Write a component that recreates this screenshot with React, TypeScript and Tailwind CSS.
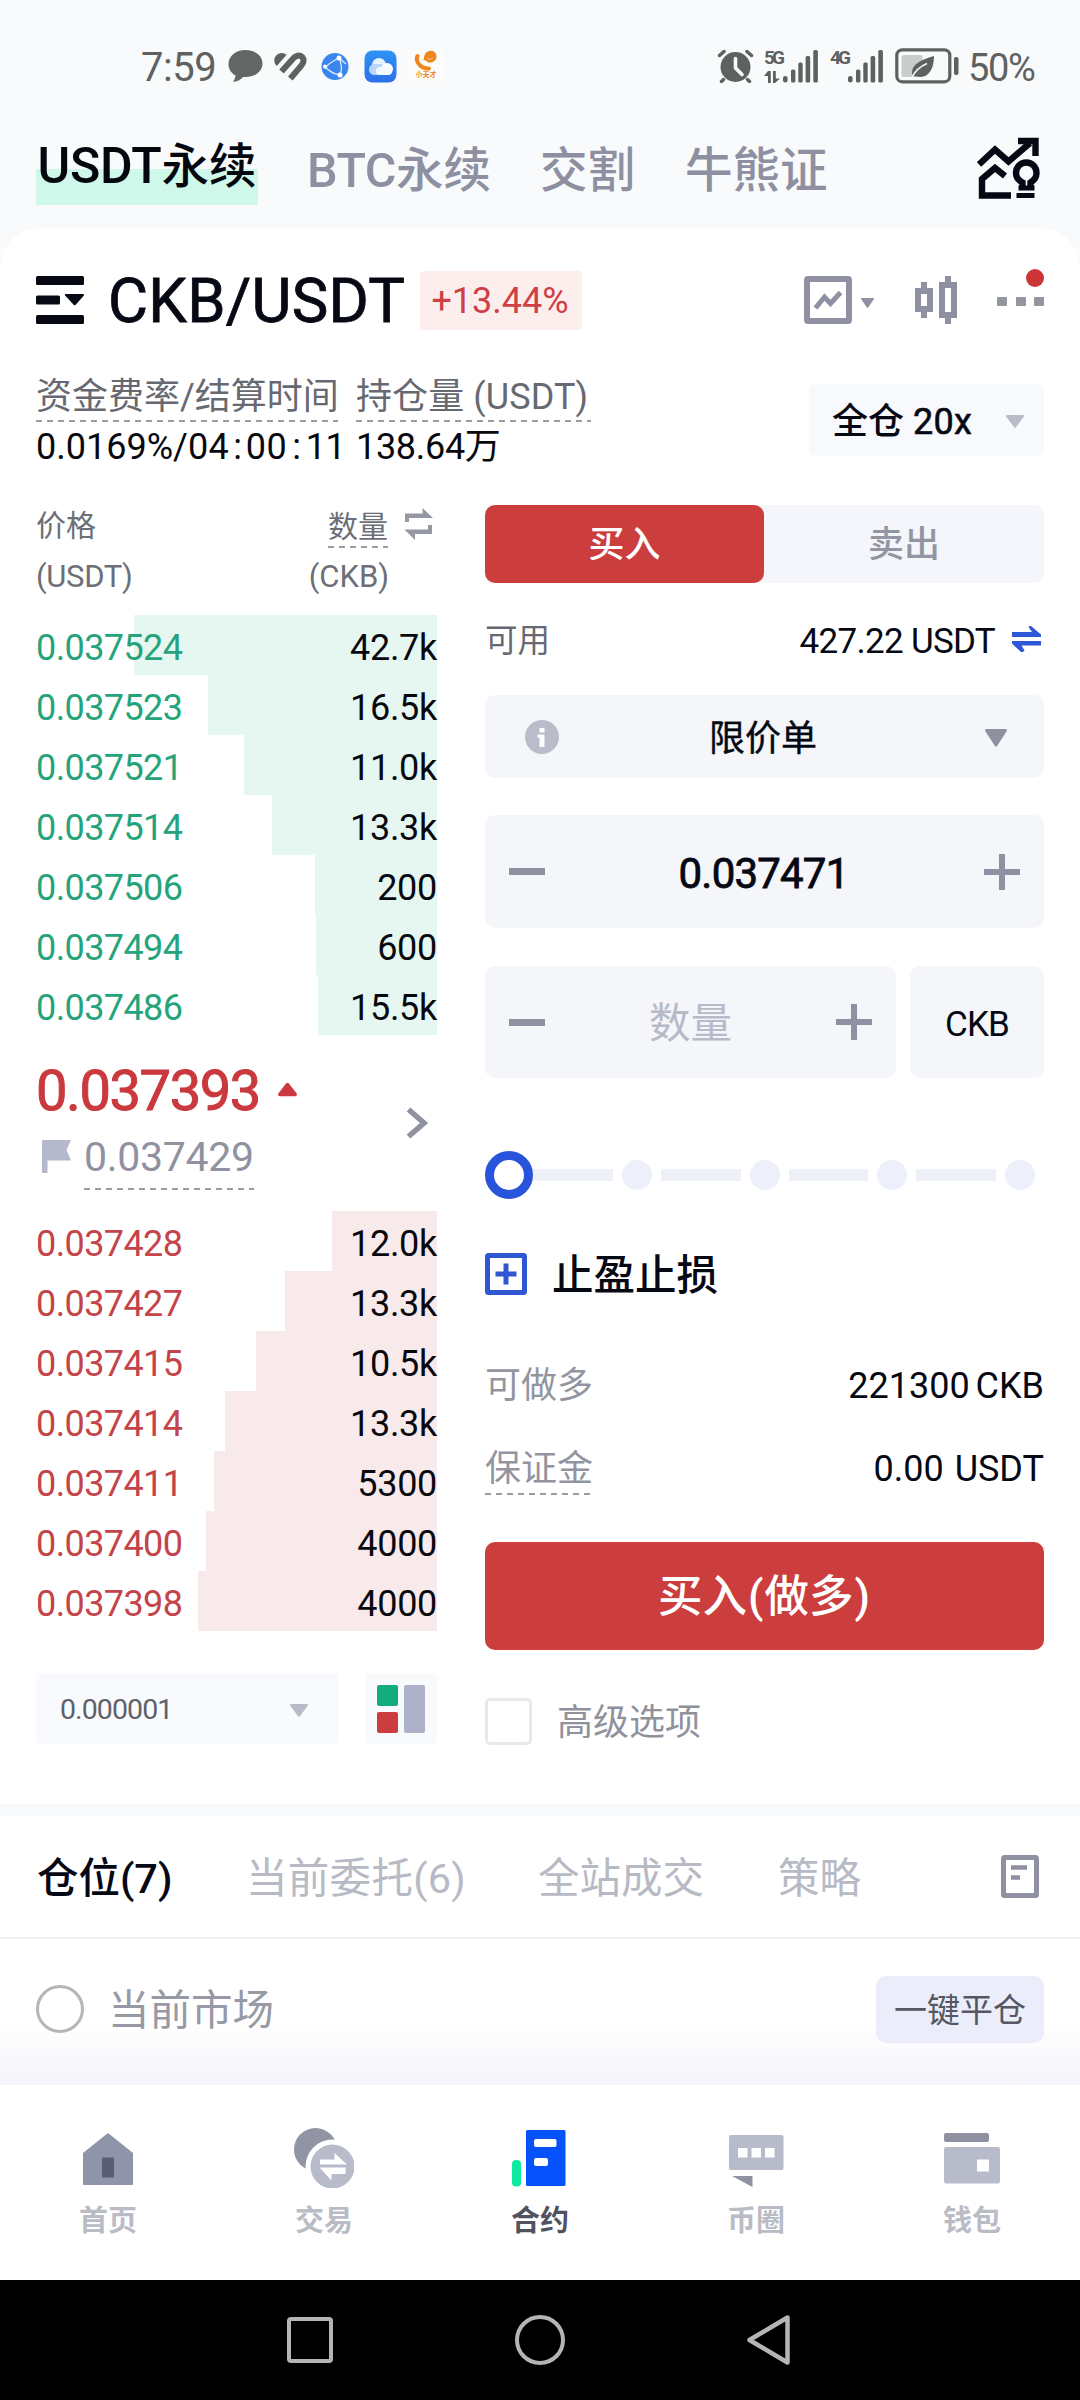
import React from "react";

type Level = { price: string; qty: string; depth: number };

const topLevels: Level[] = [
  { price: "0.037524", qty: "42.7k", depth: 303 },
  { price: "0.037523", qty: "16.5k", depth: 229 },
  { price: "0.037521", qty: "11.0k", depth: 193 },
  { price: "0.037514", qty: "13.3k", depth: 165 },
  { price: "0.037506", qty: "200", depth: 122 },
  { price: "0.037494", qty: "600", depth: 121 },
  { price: "0.037486", qty: "15.5k", depth: 119 },
];

const bottomLevels: Level[] = [
  { price: "0.037428", qty: "12.0k", depth: 105 },
  { price: "0.037427", qty: "13.3k", depth: 152 },
  { price: "0.037415", qty: "10.5k", depth: 181 },
  { price: "0.037414", qty: "13.3k", depth: 212 },
  { price: "0.037411", qty: "5300", depth: 223 },
  { price: "0.037400", qty: "4000", depth: 231 },
  { price: "0.037398", qty: "4000", depth: 239 },
];

function Dashes() {
  return (
    <span className="block h-[2px] w-full bg-[repeating-linear-gradient(90deg,#9a9ca4_0_6px,transparent_6px_11px)]" />
  );
}

function Triangle({ w, h, className }: { w: number; h: number; className: string }) {
  return (
    <svg width={w} height={h} viewBox="0 0 20 14" preserveAspectRatio="none" className={className} fill="currentColor">
      <path d="M1.2 0h17.6c1 0 1.5 1 .9 1.8L11 13.2c-.5.8-1.5.8-2 0L.3 1.8C-.3 1 .2 0 1.2 0z" />
    </svg>
  );
}

function Signal() {
  return (
    <svg width="36" height="34" viewBox="0 0 36 34" fill="#5f6160">
      <rect x="0" y="27" width="4.6" height="6.5" rx="2.2" />
      <rect x="8" y="20.5" width="4.4" height="13" rx="1.6" />
      <rect x="15.3" y="13.5" width="4.4" height="20" rx="1.6" />
      <rect x="22.6" y="7" width="4.6" height="26.5" rx="1.6" />
      <rect x="30.3" y="1" width="4.6" height="32.5" rx="1.6" />
    </svg>
  );
}

function StatusBar() {
  return (
    <div className="flex h-[132px] items-center pl-[141px] pr-[43px] text-[#5f6160]">
      <span className="w-[87px] whitespace-nowrap pt-[3px] text-[40px] leading-none tracking-[-0.500px]">7:59</span>
      <svg width="35" height="34" viewBox="0 0 35 34" fill="#646665">
        <path d="M17.5 1C8 1 .5 7 .5 15c0 5 2.500 9 7 11.500-.2 2.200-1 4.300-2.500 6.200 4 0 7.500-1.600 10-4.700h2.500c9.500 0 17-5.500 17-13.500S27 1 17.500 1z" />
      </svg>
      <svg width="34" height="30" viewBox="0 0 34 30" className="ml-[10px]">
        <path d="M3.800 15 13.600 3.800A7.400 7.400 0 0 0 3.800 15z" fill="#5f6160" />
        <path d="M8.500 20.500 19.500 8.200C22.500 4.600 27 3.300 29.200 6c2.100 2.600 1.400 6-1.200 9L17.300 27.500" fill="none" stroke="#5f6160" strokeWidth="6" />
      </svg>
      <svg width="28" height="29" viewBox="0 0 28 29" className="ml-[14px]">
        <circle cx="14" cy="14.500" r="13.500" fill="#3a86ee" />
        <g fill="none" stroke="#d9ebff" strokeWidth="1.300">
          <path d="M18 6C12 9 7 12 3.500 16.500M18 6c3 6 3 12 1 18M3.500 14c4 5 9 8 15.500 9M18 6l7 6" />
        </g>
        <circle cx="18" cy="6" r="2.500" fill="#fff" />
        <circle cx="4" cy="14.500" r="2" fill="#fff" />
        <circle cx="19" cy="23" r="2.500" fill="#fff" />
      </svg>
      <svg width="33" height="33" viewBox="0 0 33 33" className="ml-[15px]">
        <defs>
          <linearGradient id="cloudBg" x1="0" y1="0" x2="0" y2="1">
            <stop offset="0" stopColor="#2f93f5" />
            <stop offset="1" stopColor="#2c6fe8" />
          </linearGradient>
        </defs>
        <rect x=".5" y=".5" width="32" height="32" rx="8" fill="url(#cloudBg)" />
        <circle cx="15" cy="15" r="7" fill="#e7f2ff" />
        <rect x="5" y="14" width="18" height="11" rx="5.500" fill="#b8d7fb" />
        <circle cx="23" cy="19" r="6" fill="#fff" />
        <rect x="12" y="17" width="16" height="8" rx="4" fill="#f4f9ff" />
      </svg>
      <div className="ml-[11px] flex h-[32px] w-[36px] flex-col items-center bg-[#fcfcfb]">
        <svg width="24" height="21" viewBox="0 0 24 21">
          <path d="M3.500 6C1 11 6 19 15 18.500" fill="none" stroke="#f08519" strokeWidth="4" strokeLinecap="round" />
          <path d="M15.500 1c4-.8 7 2 7 5.500s-3 6-6.500 6c-2 0-3-.5-4.500-2.500C9.500 11 9 10 10 8c.5-4 2-6.500 5.500-7z" fill="#f08519" />
          <path d="M13 8c2 2 5 1.500 6-.5" fill="none" stroke="#fbd9b0" strokeWidth="1" />
        </svg>
        <span className="whitespace-nowrap text-[7px] leading-[9px] font-bold text-[#f08519]">小天才</span>
      </div>

      <div className="ml-auto flex items-center">
        <svg width="37" height="34" viewBox="0 0 37 34">
          <circle cx="18.500" cy="18" r="15" fill="#5f6160" />
          <g stroke="#5f6160" strokeWidth="3.500" strokeLinecap="round">
            <path d="M2.500 6.500 7 2.500M34.500 6.500 30 2.500M6.500 30.500 4.500 32.500M30.500 30.500l2 2" />
          </g>
          <path d="M18.500 9.500V19l6.500 6.500" fill="none" stroke="#f8fafc" strokeWidth="3.600" strokeLinecap="round" />
        </svg>
        <div className="ml-[10px] flex h-[34px] w-[19px] flex-col justify-between">
          <span className="whitespace-nowrap text-[19px] leading-[17px] font-bold tracking-[-2.800px]">5G</span>
          <svg width="17" height="12" viewBox="0 0 17 12" fill="#5f6160">
            <path d="M4 0h2.800v12H4V5H0zM9 0h2.800v7.500H16L11 12H9z" />
          </svg>
        </div>
        <Signal />
        <span className="ml-[11px] h-[34px] w-[18px] whitespace-nowrap text-[19px] leading-[17px] font-bold tracking-[-2.800px]">4G</span>
        <Signal />
        <svg width="65" height="36" viewBox="0 0 65 36" className="ml-[11px]">
          <rect x="1.800" y="1.800" width="53" height="32" rx="5.500" fill="none" stroke="#5f6160" strokeWidth="3.200" />
          <rect x="6.500" y="7" width="21" height="22" rx="2.500" fill="#c9cbcc" />
          <rect x="59" y="9" width="4.500" height="18" rx="2" fill="#5f6160" />
          <path d="M17.500 28C15 17 25 12 39 8c0 14-6 23-17 20.500z" fill="#5f6160" />
          <path d="M17 29.500C20 23 25 18.500 32 15.500" fill="none" stroke="#f0f2f3" strokeWidth="1.800" />
        </svg>
        <span className="ml-[8px] w-[69px] whitespace-nowrap pt-[3px] text-[38px] leading-none tracking-[-1.400px]">50%</span>
      </div>
    </div>
  );
}

function ProductTabs() {
  return (
    <div className="flex h-[96px] pl-[36px] pr-[40px] text-[47.500px] leading-none font-medium whitespace-nowrap text-[#8e90a1]">
      <div className="flex h-[73px] w-[222px] items-baseline justify-center bg-[linear-gradient(#f8fafc_0_37px,#cff7ea_37px)] pt-[9px] text-[#05070f]">
        <span className="text-[50px] tracking-[-0.200px]">USDT</span>永续
      </div>
      <div className="ml-[49px] mt-[15px] flex w-[187px] items-baseline">
        <span className="text-[48.500px] tracking-[-0.500px]">BTC</span>永续
      </div>
      <span className="ml-[46px] mt-[16px] w-[98px]">交割</span>
      <span className="ml-[47px] mt-[16px]">牛熊证</span>
      <svg width="63" height="62" viewBox="0 0 63 62" className="ml-auto mt-[5px]" fill="none" stroke="#060813" strokeWidth="6.400">
        <path d="M2 27.500 18 12.500 31.500 24.500 53 6" />
        <path d="M41 4h17.500v15" />
        <path d="M28 39 18 31 5 42v16.500h29" />
        <path d="M45.500 51v-5.500c-3.800-2-6.500-5-6.500-9.500 0-6 4.500-10.500 10.300-10.500S59.500 30 59.500 36c0 4.500-2.700 7.500-6 9.500V51" />
        <path d="M39.500 58.500h18M41.500 51h16" strokeWidth="5" />
      </svg>
    </div>
  );
}

function PairHeader() {
  return (
    <div className="flex h-[144px] items-center pl-[36px] pr-[36px]">
      <svg width="48" height="48" viewBox="0 0 48 48" fill="#060813">
        <rect width="48" height="9" rx="1.500" />
        <rect y="19.500" width="24" height="9" rx="1.500" />
        <path d="M30 18h17c1 0 1.300 1 .7 1.700l-8 9c-.6.700-1.500.7-2 0l-8.400-9c-.7-.7-.3-1.700.7-1.700z" />
        <rect y="39" width="48" height="9" rx="1.500" />
      </svg>
      <span className="ml-[24px] w-[312px] whitespace-nowrap pt-[3px] text-[61.500px] leading-none tracking-[0.300px] text-[#060813] [-webkit-text-stroke:0.8px_#060813]">
        CKB/USDT
      </span>
      <span className="flex h-[59px] w-[162px] items-center justify-center rounded-[4px] bg-[#fdeeee] pt-[2px] pr-[2px] text-[36px] leading-none text-[#cf4044]">
        +13.44%
      </span>
      <svg width="48" height="48" viewBox="0 0 48 48" className="ml-auto" fill="none" stroke="#8f91a3" strokeWidth="6">
        <rect x="3" y="3" width="42" height="42" rx="1" />
        <path d="M11.500 32 20.500 21l6 6.500L36.500 16.500" strokeWidth="5" />
      </svg>
      <Triangle w={13} h={10} className="ml-[9px] mt-[6px] text-[#8f91a3]" />
      <svg width="42" height="48" viewBox="0 0 42 48" className="ml-[41px]">
        <path d="M6 6h6v36H6zM30 0h6v48h-6z" fill="#8f91a3" />
        <path d="M3 15h12v18H3zM27 9h12v30H27z" fill="#fff" stroke="#8f91a3" strokeWidth="6" />
      </svg>
      <div className="relative ml-[40px] flex w-[47px] items-center justify-between pt-[3px]">
        <i className="h-[9px] w-[10px] rounded-[1px] bg-[#94969f]" />
        <i className="h-[9px] w-[10px] rounded-[1px] bg-[#94969f]" />
        <i className="h-[9px] w-[10px] rounded-[1px] bg-[#94969f]" />
        <i className="absolute right-0 -top-[25px] h-[18px] w-[18px] rounded-full bg-[#cb3538]" />
      </div>
    </div>
  );
}

function InfoRow() {
  return (
    <div className="flex h-[120px] pl-[36px] pr-[36px] whitespace-nowrap text-[36px]">
      <div className="w-[302px]">
        <div className="h-[48px] pt-[1px] leading-[48px] text-[#666972]">资金费率/结算时间</div>
        <Dashes />
        <div className="mt-[5px] leading-[40px] text-[#08090f]">
          <span>0.0169%/</span>
          <span className="tracking-[0.400px]">04</span>
          <span className="px-[4px]">:</span>
          <span className="tracking-[0.400px]">00</span>
          <span className="px-[5px]">:</span>
          <span className="tracking-[-0.500px]">11</span>
        </div>
      </div>
      <div className="ml-[18px] w-[235px]">
        <div className="h-[48px] pt-[1px] leading-[48px] tracking-[0.100px] text-[#666972]">持仓量 (USDT)</div>
        <Dashes />
        <div className="mt-[5px] leading-[40px] tracking-[-0.300px] text-[#08090f]">138.64万</div>
      </div>
      <div className="ml-auto mt-[12px] flex h-[72px] w-[235px] items-center rounded-[6px] bg-[#f8f9fc] pl-[23px] pr-[20px] leading-none text-[#060813]">
        <span className="pt-[3px] font-medium">
          全仓 <span className="font-normal tracking-[0.300px] [-webkit-text-stroke:0.6px_#060813]">20x</span>
        </span>
        <Triangle w={18} h={13} className="ml-auto mt-[3px] text-[#b8bbc8]" />
      </div>
    </div>
  );
}

function Levels({ rows, up }: { rows: Level[]; up: boolean }) {
  return (
    <div className="flex flex-col">
      {rows.map((r) => (
        <div key={r.price} className="relative flex h-[60px] items-center justify-between pt-[5px] text-[36px] leading-none">
          <div
            className={up ? "absolute right-0 top-0 h-full bg-[#e6f7f1]" : "absolute right-0 top-0 h-full bg-[#f8eaea]"}
            style={{ width: r.depth }}
          />
          <span className={up ? "relative tracking-[-0.600px] text-[#25a47b]" : "relative tracking-[-0.600px] text-[#c4444a]"}>
            {r.price}
          </span>
          <span className="relative tracking-[-0.300px] text-[#08090f]">{r.qty}</span>
        </div>
      ))}
    </div>
  );
}

function OrderBook() {
  return (
    <div className="flex w-[401px] flex-col whitespace-nowrap">
      <div className="flex h-[64px] items-center text-[30px] leading-none text-[#6c6f77]">
        <span className="pt-[3px]">价格</span>
        <div className="ml-auto flex flex-col pt-[11px]">
          <span className="mb-[4px]">数量</span>
          <Dashes />
        </div>
        <svg width="30" height="32" viewBox="0 0 30 32" className="ml-[16px] mr-[3px]" fill="#9597a3">
          <path d="M1 14V5.500h17.500V0L29 10H5v4z" />
          <path d="M28 17v9H11v6L.5 21.500H24V17z" />
        </svg>
      </div>
      <div className="flex h-[59px] justify-between pr-[48px] pt-[3px] text-[31px] leading-[36px] text-[#6c6f77]">
        <span className="tracking-[-0.300px]">(USDT)</span>
        <span>(CKB)</span>
      </div>
      <Levels rows={topLevels} up />
      <div className="flex h-[176px] justify-between">
        <div className="flex flex-col pt-[26px]">
          <div className="flex items-center text-[#c9393d]">
            <span className="text-[56px] leading-[60px] tracking-[-1.400px] [-webkit-text-stroke:1px_#c9393d]">0.037393</span>
            <svg width="19" height="15" viewBox="0 0 20 14" className="mb-[4px] ml-[18px]" fill="currentColor">
              <path d="M8.500.7c.8-.9 2.200-.9 3 0l8 10.300c.9 1.200.2 3-1.300 3H1.800c-1.500 0-2.200-1.800-1.300-3z" />
            </svg>
          </div>
          <div className="flex items-start pl-[6px] pt-[12px]">
            <svg width="30" height="33" viewBox="0 0 30 33" className="mt-[7px]" fill="#b6b9cb">
              <path d="M0 1.500C0 .7.700 0 1.500 0H29l-4.500 10L29 20.500H5.500V33H0z" />
            </svg>
            <div className="ml-[12px]">
              <div className="pb-[7px] text-[41px] leading-[48px] tracking-[-0.300px] text-[#9092a0]">0.037429</div>
              <Dashes />
            </div>
          </div>
        </div>
        <svg width="22" height="32" viewBox="0 0 22 32" className="mr-[9px] self-center" fill="none" stroke="#9092a0" strokeWidth="5.500">
          <path d="M2.500 2.500 18 16 2.500 29.500" />
        </svg>
      </div>
      <Levels rows={bottomLevels} up={false} />
      <div className="mt-[42px] flex justify-between">
        <div className="flex h-[71px] w-[303px] items-center justify-between rounded-[4px] bg-[#f9fafd] pl-[24px] pr-[31px] text-[28.500px] leading-none tracking-[-0.900px] text-[#5f626a]">
          <span className="pt-[3px]">0.000001</span>
          <Triangle w={18} h={13} className="mt-[4px] text-[#b8bbc8]" />
        </div>
        <div className="flex h-[71px] w-[72px] items-center justify-center gap-[6px] rounded-[4px] bg-[#f9fafc]">
          <div className="flex flex-col gap-[6px]">
            <i className="h-[21px] w-[21px] rounded-[2px] bg-[#13ad7b]" />
            <i className="h-[21px] w-[21px] rounded-[2px] bg-[#cb3e3d]" />
          </div>
          <i className="h-[48px] w-[21px] rounded-[2px] bg-[#adb2c9]" />
        </div>
      </div>
    </div>
  );
}

function Minus() {
  return <i className="h-[7px] w-[36px] bg-[#8f91a3]" />;
}

function Plus() {
  return (
    <svg width="36" height="36" viewBox="0 0 36 36" fill="#8f91a3">
      <path d="M15 0h6v15h15v6H21v15h-6V21H0v-6h15z" />
    </svg>
  );
}

function AmountSlider() {
  return (
    <div className="mt-[73px] flex h-[48px] items-center pr-[9px]">
      <i className="h-[48px] w-[48px] shrink-0 rounded-full border-[9px] border-[#2854dc] bg-white" />
      {[0, 1, 2, 3].map((n) => (
        <React.Fragment key={n}>
          <i className={n === 0 ? "h-[12px] flex-1 bg-[#eff1f8]" : "ml-[9px] h-[12px] flex-1 bg-[#eff1f8]"} />
          <i className="ml-[9px] h-[30px] w-[30px] shrink-0 rounded-full bg-[#edf0fb]" />
        </React.Fragment>
      ))}
    </div>
  );
}

function OrderForm() {
  return (
    <div className="flex w-[559px] flex-col whitespace-nowrap pt-[13px] leading-none text-[#060813]">
      <div className="flex h-[78px] rounded-[10px] bg-[#f4f6fb] text-[36px]">
        <div className="flex w-[279px] items-center justify-center rounded-[10px] bg-[#cc3d3d] pt-[2px] font-medium text-white">买入</div>
        <div className="flex flex-1 items-center justify-center pt-[2px] font-medium text-[#9295a2]">卖出</div>
      </div>
      <div className="flex h-[112px] items-center text-[35px]">
        <span className="pt-[4px] text-[32.500px] text-[#666972]">可用</span>
        <span className="ml-auto pt-[5px] tracking-[-0.700px]">427.22 USDT</span>
        <svg width="29" height="26" viewBox="0 0 29 26" className="ml-[17px] mr-[3px]" fill="#2f58d6">
          <path d="M0 6h20l-3.500-5 1-1H19l10 8.500V11H0z" />
          <path d="M29 15v4.500H9.500l3 5L11 26H9L0 17.500V15z" />
        </svg>
      </div>
      <div className="flex h-[83px] items-center justify-between rounded-[10px] bg-[#f4f6fa] pl-[40px] pr-[37px] text-[36px]">
        <svg width="34" height="34" viewBox="0 0 34 34">
          <circle cx="17" cy="17" r="17" fill="#b9bcc9" />
          <path d="M14.500 8h5v4.500h-5zM12.500 14.500h7V27h-5v-9.500h-2z" fill="#fff" />
        </svg>
        <span className="pt-[5px] pr-[18px] [-webkit-text-stroke:0.4px_#060813]">限价单</span>
        <Triangle w={22} h={18} className="mt-[3px] text-[#8f91a1]" />
      </div>
      <div className="mt-[37px] flex h-[113px] items-center justify-between rounded-[10px] bg-[#f4f6fa] px-[24px] text-[42px]">
        <Minus />
        <span className="pt-[4px] pr-[2px] tracking-[-0.800px] [-webkit-text-stroke:0.8px_#060813]">0.037471</span>
        <Plus />
      </div>
      <div className="mt-[38px] flex h-[112px] justify-between">
        <div className="flex w-[411px] items-center justify-between rounded-[10px] bg-[#f4f6fa] px-[24px] text-[41.500px] text-[#b7bac8]">
          <Minus />
          <span className="pt-[4px]">数量</span>
          <Plus />
        </div>
        <div className="flex w-[134px] items-center justify-center rounded-[10px] bg-[#f4f6fa] pt-[5px] text-[35px] tracking-[-0.900px]">CKB</div>
      </div>
      <AmountSlider />
      <div className="mt-[33px] flex h-[84px] items-center">
        <svg width="42" height="42" viewBox="0 0 42 42" fill="none" stroke="#2f57d2" strokeWidth="5">
          <rect x="2.500" y="2.500" width="37" height="37" rx="1" />
          <path d="M21 10.500v21M10.500 21h21" />
        </svg>
        <span className="ml-[25px] pt-[4px] text-[41.500px] font-medium">止盈止损</span>
      </div>
      <div className="mt-[28px] flex h-[82px] items-center justify-between pt-[2px] text-[36px]">
        <span className="text-[36px] text-[#9295a0]">可做多</span>
        <span className="[word-spacing:-3px]">221300 CKB</span>
      </div>
      <div className="flex h-[82px] items-center justify-between text-[36px]">
        <div className="flex flex-col pt-[11px] text-[36px] text-[#9295a0]">
          <span className="mb-[6px]">保证金</span>
          <Dashes />
        </div>
        <span className="pt-[3px] [word-spacing:2px]">0.00 USDT</span>
      </div>
      <div className="mt-[34px] flex h-[108px] items-center justify-center rounded-[10px] bg-[#cc3d3d] pt-[3px] text-[44.500px] font-medium text-white">
        买入<span className="px-[1px]">(</span>做多<span className="px-[1px]">)</span>
      </div>
      <div className="mt-[48px] flex h-[47px] items-center">
        <i className="h-[47px] w-[47px] rounded-[5px] border-[3px] border-[#e8e9eb]" />
        <span className="ml-[25px] pt-[3px] text-[36px] text-[#8f929d]">高级选项</span>
      </div>
    </div>
  );
}

function Positions() {
  return (
    <div className="h-[269px] whitespace-nowrap bg-[linear-gradient(#fff_0_205px,#fafafc_235px,#f4f5fa_269px)] leading-none">
      <div className="flex h-[123px] items-center border-b-[2px] border-[#f0f1f3] pl-[37px] pr-[41px] text-[41.500px] text-[#b7bac5]">
        <span className="w-[209px] pt-[4px] font-medium text-[#060813]">仓位(7)</span>
        <span className="w-[292px] pt-[4px] tracking-[0.300px]">当前委托(6)</span>
        <span className="w-[240px] pt-[4px]">全站成交</span>
        <span className="pt-[4px]">策略</span>
        <svg width="38" height="43" viewBox="0 0 38 43" className="ml-auto" fill="none" stroke="#8f91a3">
          <rect x="2.500" y="2.500" width="33" height="38" rx="1" strokeWidth="5" />
          <path d="M10 12.500h16M10 22.500h9" strokeWidth="4.500" />
        </svg>
      </div>
      <div className="flex h-[140px] items-center pl-[36px] pr-[36px]">
        <i className="h-[48px] w-[48px] rounded-full border-[3px] border-[#b5b6ba] bg-white" />
        <span className="ml-[24px] pt-[3px] text-[41.500px] text-[#9799a4]">当前市场</span>
        <span className="ml-auto flex h-[67px] w-[168px] items-center justify-center rounded-[10px] bg-[#ecedfa] pt-[2px] text-[33px] text-[#555863]">
          一键平仓
        </span>
      </div>
    </div>
  );
}

const navItems = [
  {
    label: "首页",
    icon: (
      <svg width="60" height="60" viewBox="0 0 60 60">
        <path d="M30 5 55 25v31c0 .6-.4 1-1 1H6c-.6 0-1-.4-1-1V25z" fill="#9094a8" />
        <rect x="24" y="29.500" width="12" height="20" rx="1" fill="#5a5e73" />
      </svg>
    ),
  },
  {
    label: "交易",
    icon: (
      <svg width="60" height="60" viewBox="0 0 60 60">
        <circle cx="21.500" cy="21.500" r="21.500" fill="#9094a5" />
        <circle cx="38.500" cy="38.500" r="27" fill="#fff" />
        <circle cx="38.500" cy="38.500" r="22" fill="#b8bbc9" />
        <path d="M26 31.500h14.500V25L53 36.500H26zM51.500 39.500V46h-14v6.500L25.500 39.500z" fill="#fff" />
      </svg>
    ),
  },
  {
    label: "合约",
    active: true,
    icon: (
      <svg width="60" height="60" viewBox="0 0 60 60">
        <rect x="2" y="32" width="9" height="26.500" rx="4" fill="#0ceaa0" />
        <rect x="16" y="2" width="39.500" height="56" rx="1.500" fill="#0652fb" />
        <rect x="24" y="11" width="22.500" height="8" rx="2" fill="#fff" />
        <rect x="24" y="30" width="14" height="8" rx="2" fill="#fff" />
      </svg>
    ),
  },
  {
    label: "币圈",
    icon: (
      <svg width="60" height="60" viewBox="0 0 60 60">
        <rect x="3" y="7" width="54.500" height="35" rx="2" fill="#b8bbca" />
        <path d="M12 20h9.500v9.500H12zM25.500 20H35v9.500h-9.500zM39 20h9.500v9.500H39z" fill="#fff" />
        <path d="M6 48h20.500v11z" fill="#9092a1" />
      </svg>
    ),
  },
  {
    label: "钱包",
    icon: (
      <svg width="60" height="60" viewBox="0 0 60 60">
        <rect x="2" y="5" width="45" height="9" rx="2" fill="#8f91a1" />
        <rect x="2" y="19" width="56" height="36.500" rx="2" fill="#b8bbca" />
        <rect x="35" y="31.500" width="12" height="12" fill="#fff" />
      </svg>
    ),
  },
];

function BottomNav() {
  return (
    <div className="grid h-[195px] grid-cols-5 bg-white pt-[43px]">
      {navItems.map((n) => (
        <div key={n.label} className="flex flex-col items-center">
          {n.icon}
          <span
            className={
              n.active
                ? "mt-[19px] text-[29px] leading-none font-bold text-[#50535f]"
                : "mt-[19px] text-[29px] leading-none font-bold text-[#b9bbc5]"
            }
          >
            {n.label}
          </span>
        </div>
      ))}
    </div>
  );
}

function SystemBar() {
  return (
    <div className="flex h-[120px] items-center justify-center bg-black pr-[2px]">
      <i className="h-[46px] w-[46px] rounded-[4px] border-[4.500px] border-[#b5b5b5]" />
      <i className="ml-[182px] h-[50px] w-[50px] rounded-full border-[4.500px] border-[#b5b5b5]" />
      <svg width="46" height="52" viewBox="0 0 46 52" className="ml-[181px]" fill="none" stroke="#b5b5b5" strokeWidth="4.500" strokeLinejoin="round">
        <path d="M41.500 3.500v45L3.500 26z" />
      </svg>
    </div>
  );
}

export default function App() {
  return (
    <div className="flex h-[2400px] w-[1080px] flex-col overflow-hidden bg-[#f8fafc] font-['Roboto','Noto_Sans_CJK_SC',sans-serif]">
      <StatusBar />
      <ProductTabs />
      <div className="flex h-[1576px] flex-col rounded-t-[40px] bg-white">
        <PairHeader />
        <InfoRow />
        <div className="flex gap-[48px] pl-[36px]">
          <OrderBook />
          <OrderForm />
        </div>
      </div>
      <div className="h-[12px] bg-[#f8f9fb]" />
      <Positions />
      <BottomNav />
      <SystemBar />
    </div>
  );
}
